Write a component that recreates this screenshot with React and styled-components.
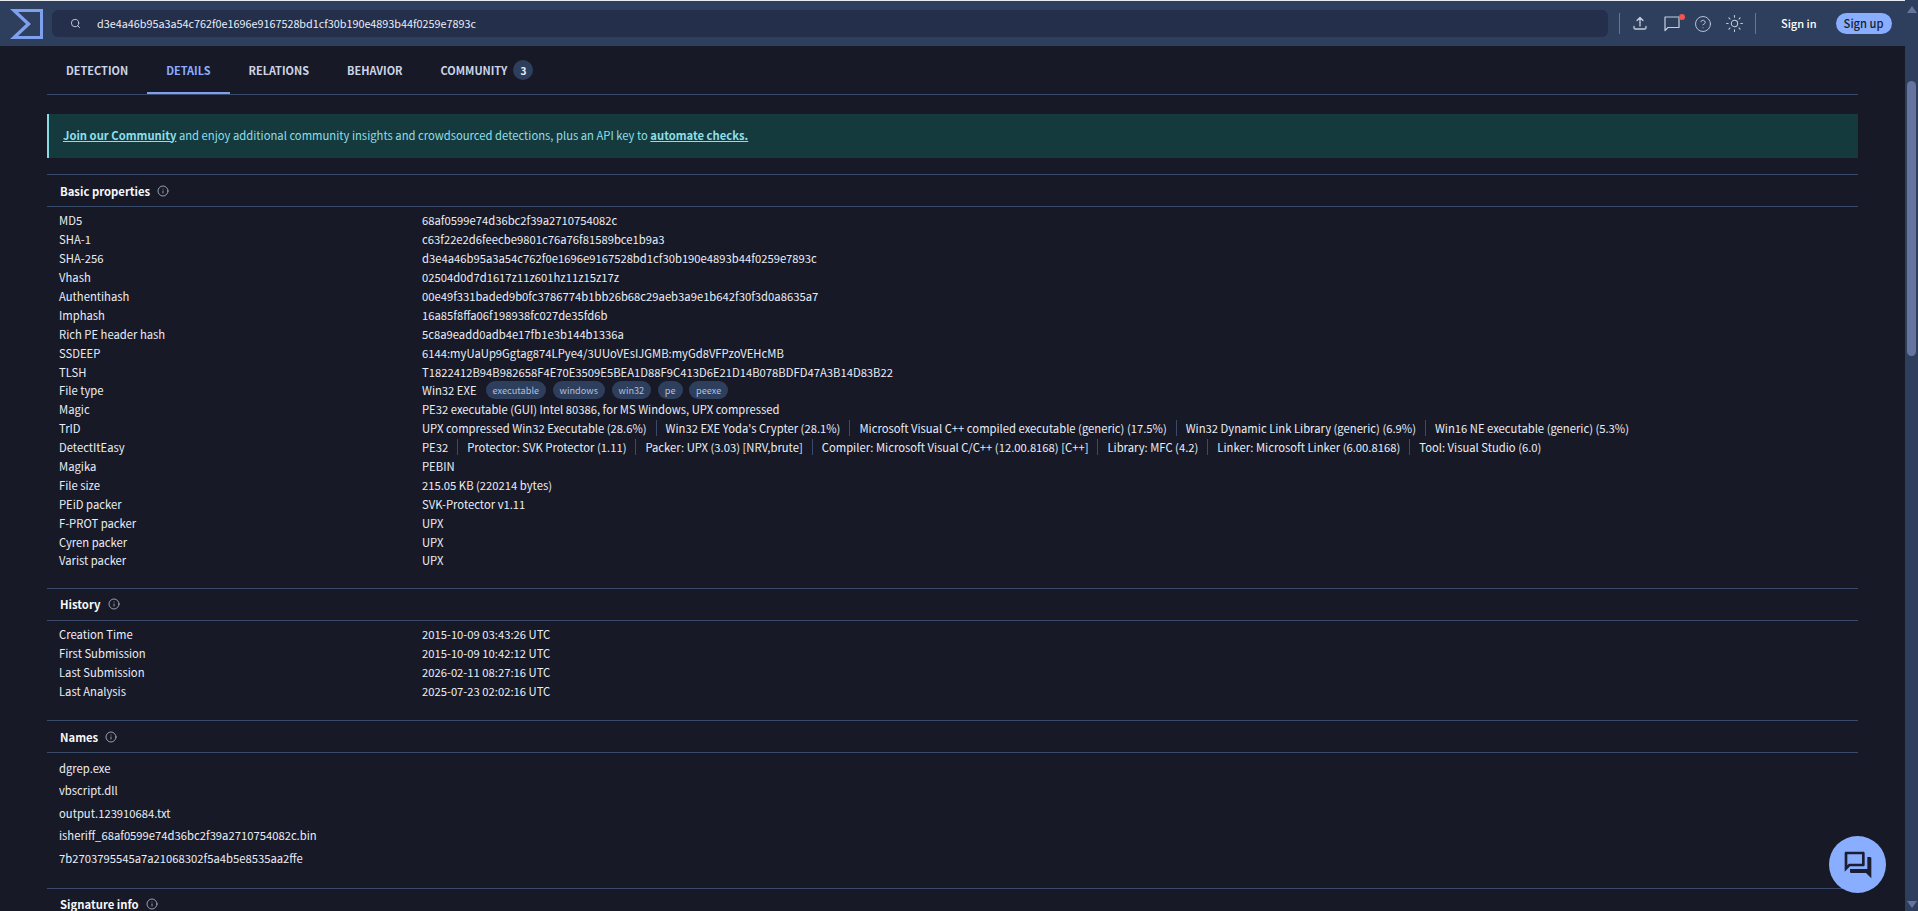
import React from "react";
import styled, { createGlobalStyle } from "styled-components";
import { Search, CircleHelp, Sun, Info } from "lucide-react";

const Global = createGlobalStyle`
  html, body { margin: 0; padding: 0; height: 100%; overflow: hidden; background: #181926; }
  body { font-family: "Noto Sans CJK JP", "Noto Sans", sans-serif; font-size: 11.25px; color: #eaeef7; }
  * { box-sizing: border-box; }
`;

const Page = styled.div`display: flex; flex-direction: column; height: 911px; overflow: hidden;`;
const TopBar = styled.header`
  flex: none; height: 46px; display: flex; align-items: center; background: #2e3f5e;
  border-top: 1px solid #e8ebf2; padding-left: 10px;
`;
const LogoBox = styled.svg`flex: none; width: 33px; height: 30px; margin-right: 9px;`;
const SearchBox = styled.div`
  flex: none; width: 1556px; height: 27px; border-radius: 6px; background: #232f4b;
  display: flex; align-items: center; padding-left: 18px; gap: 16px; font-size: 10.8px; color: #eaeef7;
`;
const SearchText = styled.span`padding-bottom: 2px;`;
const IconGroup = styled.div`
  flex: none; display: flex; align-items: center; height: 21px; margin-left: 11px; padding: 0 10.5px 0 10px;
  gap: 11.5px; border-left: 1px solid #64749a; border-right: 1px solid #64749a; color: #c5cede;
`;
const IconButton = styled.span`position: relative; display: flex; width: 20px; height: 20px; align-items: center; justify-content: center;`;
const RedDot = styled.span`position: absolute; top: 0; right: -3px; width: 6px; height: 6px; border-radius: 50%; background: #f4534f;`;
const SignIn = styled.span`margin-left: 25px; padding-bottom: 2px; font-size: 11px; color: #ffffff; font-weight: 500;`;
const SignUp = styled.span`
  margin-left: 19px; width: 56px; height: 21px; padding-bottom: 2px; border-radius: 11px; background: #8aaeff; color: #1a1e30;
  font-size: 11.2px; font-weight: 500; display: flex; align-items: center; justify-content: center;
`;
const Body = styled.div`flex: 1; min-height: 0; display: flex;`;
const Main = styled.main`flex: 1; min-width: 0; padding: 0 47px 0 47px; overflow: hidden;`;
const Scrollbar = styled.div`
  flex: none; width: 13px; margin-top: -46px; position: relative; z-index: 2; background: #2e3f5e;
  display: flex; flex-direction: column; align-items: center;
`;
const ArrowUp = styled.span`
  margin-top: 6px; width: 0; height: 0; border-left: 5px solid transparent; border-right: 5px solid transparent;
  border-bottom: 7px solid #64749f;
`;
const Thumb = styled.span`margin-top: 68px; width: 9px; height: 275px; border-radius: 5px; background: #64749f;`;
const ArrowDown = styled.span`
  margin-top: auto; margin-bottom: 3px; width: 0; height: 0; border-left: 5px solid transparent; border-right: 5px solid transparent;
  border-top: 7px solid #64749f;
`;
const Tabs = styled.nav`display: flex; height: 49px; border-bottom: 1px solid #3a4a6b;`;
const Tab = styled.div`
  height: 48px; padding: 2px 19px 0; display: flex; align-items: center; gap: 6px;
  font-size: 10.95px; font-weight: 700; color: ${p => (p.$active ? "#8aaeff" : "#ccd5e8")};
  border-bottom: 2px solid ${p => (p.$active ? "#7f9fe8" : "transparent")};
`;
const Badge = styled.span`
  width: 20px; height: 20px; border-radius: 50%; background: #2e3f5e; color: #eaeef7;
  font-size: 10px; display: flex; align-items: center; justify-content: center;
`;
const Banner = styled.div`
  margin-top: 19px; height: 44px; padding: 0 0 3px 14px; background: #153a3d; border-left: 2px solid #86dbe5;
  display: flex; align-items: center; color: #8fdfe8; font-size: 11.25px; white-space: pre;
`;
const BannerLink = styled.a`font-weight: 700; text-decoration: underline; color: #8fdfe8;`;
const Section = styled.section`
  border-top: 1px solid #3a4a6b; margin-top: ${p => p.$gap}px;
`;
const SectionHead = styled.div`
  height: 32px; border-bottom: 1px solid #3a4a6b; display: flex; align-items: center; gap: 7px; padding-left: 13px;
  font-size: 11.3px; font-weight: 700; color: #f6f8fc;
  svg { color: #c0c9da; }
`;
const Rows = styled.div`padding: 4px 0 0 12px; `;
const Row = styled.div`display: grid; grid-template-columns: 363px 1fr; height: 18.9px; align-items: center; font-size: 11.25px; white-space: nowrap;`;
const Label = styled.div`color: #eaeef7;`;
const Value = styled.div`display: flex; align-items: center; color: #eaeef7;`;
const Piece = styled.span`
  & + & { margin-left: 9px; padding-left: 9px; border-left: 1px solid #3a4a6b; }
`;
const Tag = styled.span`
  margin-left: ${p => (p.$first ? 9 : 6.5)}px; height: 18px; padding: 0 7px; border-radius: 9px; background: #2e3f5e;
  color: #b4bfd8; font-size: 9.2px; display: flex; align-items: center;
`;
const NameList = styled.div`padding: 3px 0 19px 12px;`;
const Name = styled.div`height: 22.5px; display: flex; align-items: center; font-size: 11.25px;`;
const Fab = styled.div`
  position: fixed; left: 1829px; top: 836px; width: 57px; height: 57px; border-radius: 50%; background: #8aaeff;
  display: flex; align-items: center; justify-content: center; color: #1a1e30;
`;

const basic = [
  ["MD5", "68af0599e74d36bc2f39a2710754082c"],
  ["SHA-1", "c63f22e2d6feecbe9801c76a76f81589bce1b9a3"],
  ["SHA-256", "d3e4a46b95a3a54c762f0e1696e9167528bd1cf30b190e4893b44f0259e7893c"],
  ["Vhash", "02504d0d7d1617z11z601hz11z15z17z"],
  ["Authentihash", "00e49f331baded9b0fc3786774b1bb26b68c29aeb3a9e1b642f30f3d0a8635a7"],
  ["Imphash", "16a85f8ffa06f198938fc027de35fd6b"],
  ["Rich PE header hash", "5c8a9eadd0adb4e17fb1e3b144b1336a"],
  ["SSDEEP", "6144:myUaUp9Ggtag874LPye4/3UUoVEsIJGMB:myGd8VFPzoVEHcMB"],
  ["TLSH", "T1822412B94B982658F4E70E3509E5BEA1D88F9C413D6E21D14B078BDFD47A3B14D83B22"],
  ["File type", ["Win32 EXE"], ["executable", "windows", "win32", "pe", "peexe"]],
  ["Magic", "PE32 executable (GUI) Intel 80386, for MS Windows, UPX compressed"],
  ["TrID", ["UPX compressed Win32 Executable (28.6%)", "Win32 EXE Yoda's Crypter (28.1%)", "Microsoft Visual C++ compiled executable (generic) (17.5%)", "Win32 Dynamic Link Library (generic) (6.9%)", "Win16 NE executable (generic) (5.3%)"]],
  ["DetectItEasy", ["PE32", "Protector: SVK Protector (1.11)", "Packer: UPX (3.03) [NRV,brute]", "Compiler: Microsoft Visual C/C++ (12.00.8168) [C++]", "Library: MFC (4.2)", "Linker: Microsoft Linker (6.00.8168)", "Tool: Visual Studio (6.0)"]],
  ["Magika", "PEBIN"],
  ["File size", "215.05 KB (220214 bytes)"],
  ["PEiD packer", "SVK-Protector v1.11"],
  ["F-PROT packer", "UPX"],
  ["Cyren packer", "UPX"],
  ["Varist packer", "UPX"],
];
const history = [
  ["Creation Time", "2015-10-09 03:43:26 UTC"],
  ["First Submission", "2015-10-09 10:42:12 UTC"],
  ["Last Submission", "2026-02-11 08:27:16 UTC"],
  ["Last Analysis", "2025-07-23 02:02:16 UTC"],
];
const names = ["dgrep.exe", "vbscript.dll", "output.123910684.txt", "isheriff_68af0599e74d36bc2f39a2710754082c.bin", "7b2703795545a7a21068302f5a4b5e8535aa2ffe"];

const DataRow = ({ label, value, tags }) => (
  <Row>
    <Label>{label}</Label>
    <Value>
      {Array.isArray(value) ? value.map(v => <Piece key={v}>{v}</Piece>) : value}
      {tags && tags.map((t, i) => <Tag key={t} $first={i === 0}>{t}</Tag>)}
    </Value>
  </Row>
);
const Head = ({ children }) => (
  <SectionHead>{children}<Info size={12} strokeWidth={1.5} /></SectionHead>
);

export default function App() {
  return (
    <Page>
      <Global />
      <TopBar>
        <LogoBox viewBox="0 0 33 30" fill="none">
          <path d="M0 0H33V30H0L16 15Z M8 3L21 15L8 27H30V3Z" fill="#7f9fef" fillRule="evenodd" />
        </LogoBox>
        <SearchBox>
          <Search size={11} color="#c5cede" />
          <SearchText>d3e4a46b95a3a54c762f0e1696e9167528bd1cf30b190e4893b44f0259e7893c</SearchText>
        </SearchBox>
        <IconGroup>
          <IconButton>
            <svg width="20" height="20" viewBox="0 0 20 20" fill="none" stroke="currentColor" strokeWidth="1.3" strokeLinecap="round" strokeLinejoin="round"><path d="M4 12.5v1.3A1.2 1.2 0 0 0 5.2 15h9.6a1.2 1.2 0 0 0 1.2-1.2v-1.3M10 12V3.5M7 6.5l3-3 3 3" /></svg>
          </IconButton>
          <IconButton>
            <svg width="20" height="20" viewBox="0 0 20 20" fill="none" stroke="currentColor" strokeWidth="1.2" strokeLinejoin="round"><path d="M3 3h14v10.5H6l-3 3z" /></svg>
            <RedDot />
          </IconButton>
          <IconButton><CircleHelp size={18} strokeWidth={1.2} /></IconButton>
          <IconButton><Sun size={19} strokeWidth={1.3} /></IconButton>
        </IconGroup>
        <SignIn>Sign in</SignIn>
        <SignUp>Sign up</SignUp>
      </TopBar>
      <Body>
        <Main>
          <Tabs>
            <Tab>DETECTION</Tab>
            <Tab $active>DETAILS</Tab>
            <Tab>RELATIONS</Tab>
            <Tab>BEHAVIOR</Tab>
            <Tab>COMMUNITY<Badge>3</Badge></Tab>
          </Tabs>
          <Banner>
            <BannerLink>Join our Community</BannerLink> and enjoy additional community insights and crowdsourced detections, plus an API key to <BannerLink>automate checks.</BannerLink>
          </Banner>
          <Section $gap={16}>
            <Head>Basic properties</Head>
            <Rows>
              {basic.map(([l, v, t]) => <DataRow key={l} label={l} value={v} tags={t} />)}
            </Rows>
          </Section>
          <Section $gap={18}>
            <Head>History</Head>
            <Rows>
              {history.map(([l, v]) => <DataRow key={l} label={l} value={v} />)}
            </Rows>
          </Section>
          <Section $gap={20}>
            <Head>Names</Head>
            <NameList>
              {names.map(n => <Name key={n}>{n}</Name>)}
            </NameList>
          </Section>
          <Section $gap={0}>
            <Head>Signature info</Head>
          </Section>
        </Main>
        <Scrollbar>
          <ArrowUp />
          <Thumb />
          <ArrowDown />
        </Scrollbar>
      </Body>
      <Fab>
        <svg width="32" height="32" viewBox="0 0 24 24" fill="currentColor"><path d="M15 4v7H5.17l-.59.59-.58.58V4h11m1-2H3c-.55 0-1 .45-1 1v14l4-4h10c.55 0 1-.45 1-1V3c0-.55-.45-1-1-1zm5 4h-2v9H6v2c0 .55.45 1 1 1h11l4 4V7c0-.55-.45-1-1-1z" /></svg>
      </Fab>
    </Page>
  );
}
